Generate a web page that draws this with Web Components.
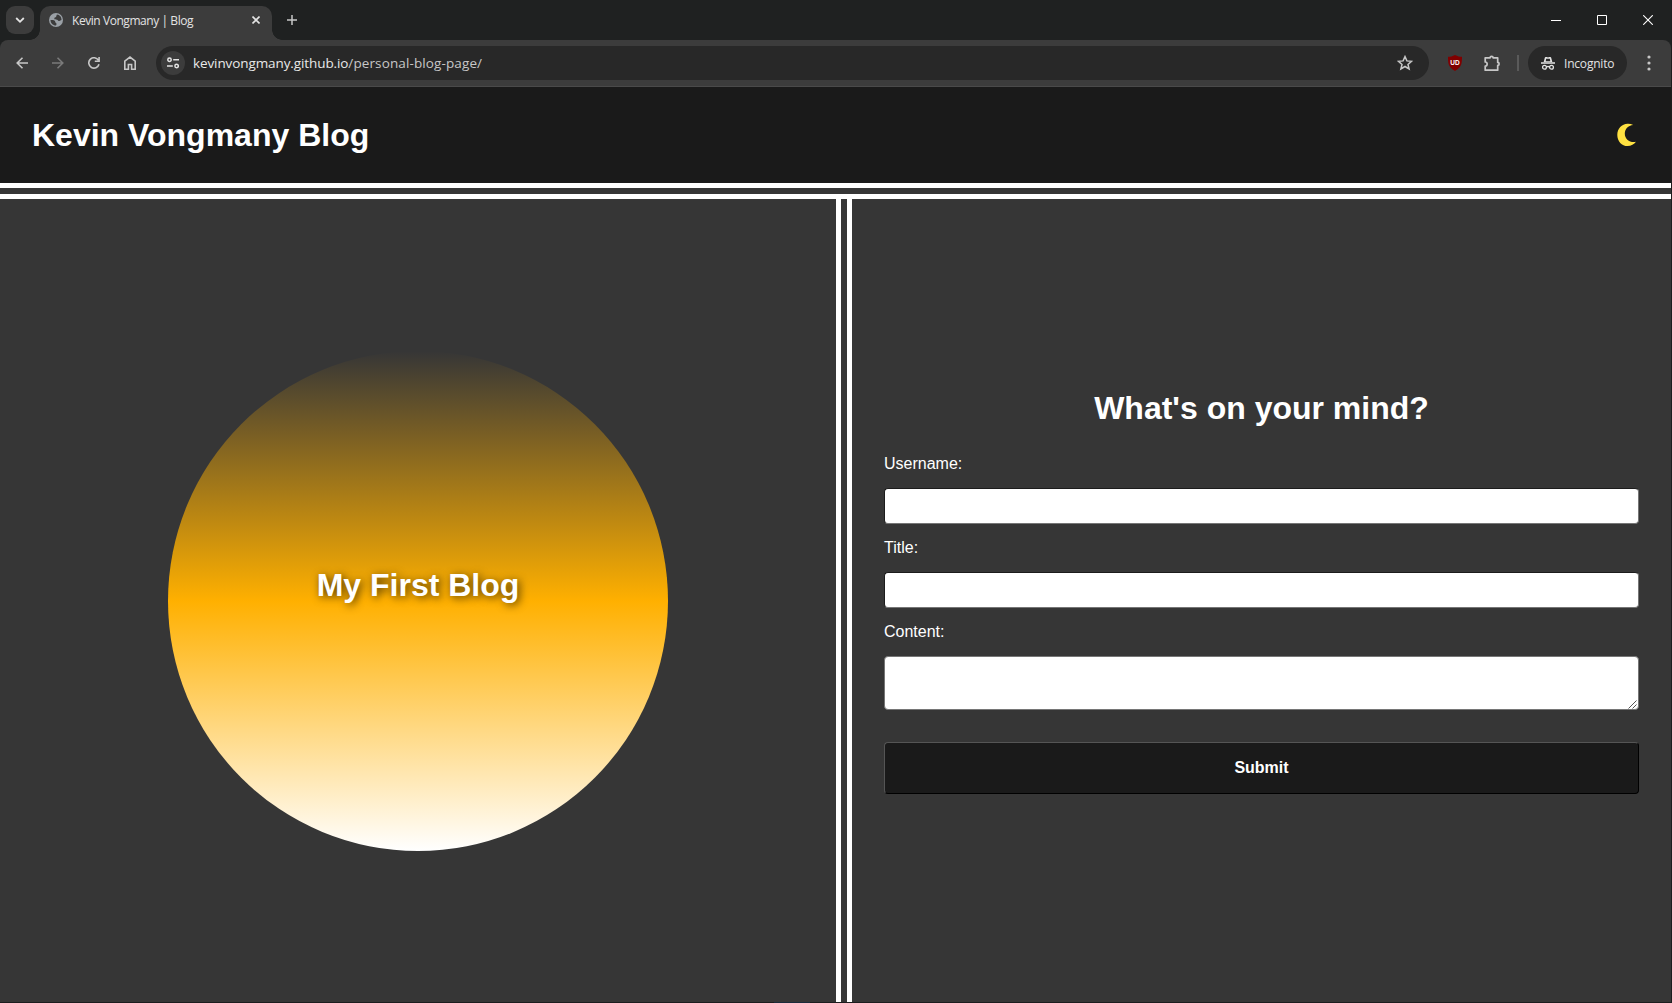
<!DOCTYPE html>
<html lang="en">
<head>
<meta charset="utf-8">
<title>Kevin Vongmany | Blog</title>
<style>
html,body{margin:0;height:100%;overflow:hidden}
body{background:linear-gradient(90deg,transparent 774px,#1b2b3b 774px 810px,transparent 810px) 0 1002px/100% 1px no-repeat #1c1d1e}
</style>
</head>
<body>
<browser-window></browser-window>
<script>
const define = (name, html) => {
  const t = document.createElement('template');
  t.innerHTML = html;
  customElements.define(name, class extends HTMLElement {
    constructor() {
      super();
      this.attachShadow({ mode: 'open' }).appendChild(t.content.cloneNode(true));
    }
  });
};

const icons = {
  chevron: [10, 10, '<path d="M1.200 3 5 6.800 8.800 3" fill="none" stroke="#e3e3e3" stroke-width="1.8"/>'],
  globe: [14, 14, '<circle cx="7" cy="7" r="7" fill="#9aa0a6"/><path d="M8 1.5c2.800.3 4.600 2.700 4.500 5.500-1 .2-1.200 1-2.200 1-1.300 0-1.300-1.100-2.300-1.300-1.500-.2-2.700.2-2.700-1.200 0-1.200 1.200-1 1.700-1.500.5-.6.2-1.500 1-2.500zM1.500 7c1.400 0 3.300 0 4.200.8.7.6.3 1.500 1 1.900.9.500 1.200.9.300 2.900-3.200-.1-5.500-2.600-5.500-5.600z" fill="#3c3c3c"/>'],
  x: [8, 8, '<path d="M.5.5l7 7M7.500.5l-7 7" stroke="#e3e3e3" stroke-width="1.600"/>'],
  plus: [10, 10, '<path d="M5 0v10M0 5h10" stroke="#c7c7c7" stroke-width="1.500"/>'],
  min: [10, 10, '<path d="M0 5.500h10" stroke="#fff"/>'],
  max: [10, 10, '<path d="M.5.5h9v9h-9z" fill="none" stroke="#fff"/>'],
  close: [10, 10, '<path d="M.2.2l9.600 9.600M9.800.2.2 9.800" stroke="#fff" stroke-width="1.100"/>'],
  back: [12, 12, '<path d="M12 6H1.300M6.500.7 1.200 6l5.300 5.300" fill="none" stroke="#c7c7c7" stroke-width="1.600"/>'],
  forward: [12, 12, '<path d="M0 6h10.700M5.500.7 10.800 6l-5.300 5.300" fill="none" stroke="#7a7a7a" stroke-width="1.600"/>'],
  reload: [12, 12, '<path d="M10.400 3.200A5.200 5.200 0 1 0 11 7.300M11.100 0v4.300H6.800" fill="none" stroke="#c7c7c7" stroke-width="1.600"/>'],
  home: [12, 14, '<path d="M.8 5.200 6 1.100l5.200 4.100v8H7.600V8.500H4.400v4.700H.8z" fill="none" stroke="#c7c7c7" stroke-width="1.600"/>'],
  tune: [12, 12, '<g fill="none" stroke="#e3e3e3" stroke-width="1.500"><circle cx="2.500" cy="2.700" r="1.700"/><path d="M6.200 2.700H12M0 9h5.800"/><circle cx="9.600" cy="9" r="1.700"/></g>'],
  star: [16, 16, '<path d="M8 1.600l1.900 4.300 4.600.4-3.500 3.100 1.100 4.600L8 11.500 3.900 14 5 9.400 1.500 6.300l4.600-.4z" fill="none" stroke="#c7c7c7" stroke-width="1.500"/>'],
  puzzle: [17, 17, '<path d="M1.200 2.800h4.900c0-1.900 3-1.900 3 0h4.600v4.600c1.900 0 1.900 3 0 3v4.800H1.200v-4.100c2.600 0 2.600-4.100 0-4.100z" fill="none" stroke="#c7c7c7" stroke-width="1.700" stroke-linejoin="round"/>'],
  incognito: [14, 14, '<path d="M4.700 1h1.200l1.100.5L8.100 1h1.200c.5 0 .8.300.9.700L11.300 6H2.700l1.100-4.300c.1-.4.400-.7.900-.7zM0 6.300h14v1.400H0z" fill="#e3e3e3"/><path d="M5.200 2.800h3.600l.5 2.500H4.700z" fill="#282828"/><g fill="none" stroke="#e3e3e3" stroke-width="1.300"><circle cx="3.500" cy="11.200" r="1.900"/><circle cx="10.500" cy="11.200" r="1.900"/><path d="M5.400 10.900q1.600-.8 3.200 0"/></g>'],
  dots: [4, 16, '<g fill="#c7c7c7"><circle cx="2" cy="2" r="1.600"/><circle cx="2" cy="8" r="1.600"/><circle cx="2" cy="14" r="1.600"/></g>'],
  grip: [10, 10, '<path d="M.5 9.500l8-8M4.500 9.500l4-4" stroke="#555" fill="none"/>'],
  moon: [20, 24, '<path d="M16.200 2.100A10 10 0 0 0 10.600.7C4.700.7.300 5.700.3 11.900S4.700 23 10.600 23c3.500 0 6.500-1.600 8.400-4.200-6 1.200-11.200-2.600-11.200-8.100 0-4.500 3.200-8.100 8.400-8.600z" fill="#ffe141"/>']
};
customElements.define('ui-icon', class extends HTMLElement {
  constructor() { super(); this.attachShadow({ mode: 'open' }); }
  connectedCallback() {
    const [w, h, body] = icons[this.getAttribute('name')];
    this.shadowRoot.innerHTML = `<style>:host{display:block;flex:none}svg{display:block}</style><svg width="${w}" height="${h}" viewBox="0 0 ${w} ${h}">${body}</svg>`;
  }
});

define('ublock-badge', `<style>
:host{display:grid;width:14px;height:16px;flex:none}
svg,span{grid-area:1/1}
span{font:bold 6.500px/16px "Liberation Sans",sans-serif;color:#fff;text-align:center}
</style><svg width="14" height="16" viewBox="0 0 14 16"><path d="M7 0c2.500 1.300 4.500 1.800 7 1.800 0 7-.3 10.200-7 14.200C.3 12 0 8.800 0 1.800 2.500 1.800 4.500 1.300 7 0z" fill="#800000"/></svg><span>UD</span>`);

define('tab-strip', `<style>
:host{display:flex;height:40px;background:#1f2121;box-sizing:border-box;padding:6px 18px 0 6px;font:12px "Open Sans",sans-serif;color:#e3e3e3}
.search{width:28px;height:28px;border-radius:9px;background:#3c3c3c;display:grid;place-items:center;margin-right:6px}
.tab{position:relative;width:232px;height:34px;box-sizing:border-box;background:#3c3c3c;border-radius:10px 10px 0 0;display:flex;align-items:center;padding:0 12px 6px 9px}
.tab::before,.tab::after{content:"";position:absolute;bottom:0;width:10px;height:10px}
.tab::before{left:-10px;background:radial-gradient(circle at 0 0,transparent 9.500px,#3c3c3c 10px)}
.tab::after{right:-10px;background:radial-gradient(circle at 100% 0,transparent 9.500px,#3c3c3c 10px)}
.title{margin:1px 0 0 9px;flex:1;white-space:nowrap;letter-spacing:-.44px}
.new{margin:9px 0 0 15px}
.controls{margin:9px 0 0 auto;display:flex;gap:36px}
</style>
<div class="search"><ui-icon name="chevron"></ui-icon></div>
<div class="tab"><ui-icon name="globe"></ui-icon><span class="title"><slot></slot></span><ui-icon name="x"></ui-icon></div>
<ui-icon class="new" name="plus"></ui-icon>
<div class="controls"><ui-icon name="min"></ui-icon><ui-icon name="max"></ui-icon><ui-icon name="close"></ui-icon></div>`);

define('tool-bar', `<style>
:host{display:block;background:#1f2121;font-family:"Open Sans",sans-serif}
.bar{display:flex;align-items:center;height:47px;box-sizing:border-box;background:#3c3c3c;border-bottom:1px solid #4a4a4a;border-radius:8px 8px 0 0;padding:0 20px 0 16px}
.nav{display:flex;align-items:center;gap:24px;width:140px}
.omni{flex:1;height:34px;border-radius:17px;background:#282828;display:flex;align-items:center;padding:0 16px 0 5px}
.site{width:24px;height:24px;border-radius:50%;background:#3c3c3c;display:grid;place-items:center}
.url{flex:1;margin-left:8px;font-size:13.500px;color:#c7c7c7;white-space:nowrap;letter-spacing:.12px}
.url ::slotted(b){font-weight:400;color:#e9e9e9;letter-spacing:-.1px}
ublock-badge{margin-left:19px}
.puzzle{margin-left:22px}
.sep{width:2px;height:16px;background:#5a5a5a;margin:0 9px 0 16px}
.inc{box-sizing:border-box;width:99px;height:34px;border-radius:17px;background:#282828;display:flex;align-items:center;gap:9px;padding-left:13px;font-size:12px;color:#e3e3e3;letter-spacing:-.2px;margin-right:20px}
</style>
<div class="bar"><div class="nav"><ui-icon name="back"></ui-icon><ui-icon name="forward"></ui-icon><ui-icon name="reload"></ui-icon><ui-icon name="home"></ui-icon></div>
<div class="omni"><div class="site"><ui-icon name="tune"></ui-icon></div><span class="url"><slot></slot></span><ui-icon name="star"></ui-icon></div>
<ublock-badge></ublock-badge><ui-icon class="puzzle" name="puzzle"></ui-icon><div class="sep"></div>
<div class="inc"><ui-icon name="incognito"></ui-icon><span>Incognito</span></div><ui-icon name="dots"></ui-icon></div>`);

define('blog-header', `<style>
:host{display:flex;justify-content:space-between;align-items:center;box-sizing:border-box;height:112px;padding:0 34px 0 32px;background:#1a1a1a}
:host{border-bottom:16px double #fff;background-clip:padding-box}
h1{margin:0;font-size:32px;line-height:37px}
</style><h1><slot></slot></h1><ui-icon name="moon"></ui-icon>`);

define('sun-circle', `<style>
:host{display:flex;align-items:center;justify-content:center;width:500px;height:500px;border-radius:50%;background:linear-gradient(transparent,#ffb000 50%,#fff)}
h1{margin:0 0 30px;font-size:32px;line-height:37px;text-shadow:2px 2px 8px rgba(0,0,0,.7)}
</style><h1><slot></slot></h1>`);

define('text-field', `<style>
:host{display:block}
label{display:block;font-size:16px;line-height:18px;margin-bottom:15px}
input{display:block;box-sizing:border-box;width:100%;height:36px;margin:0;background:#fff;border:1px solid;border-color:#1c1c1c #767676 #767676 #1c1c1c;border-radius:4px}
</style><label><slot></slot></label><input>`);

define('area-field', `<style>
:host{display:block;position:relative}
label{display:block;font-size:16px;line-height:18px;margin-bottom:15px}
textarea{display:block;box-sizing:border-box;width:100%;height:54px;margin:0;background:#fff;border:1px solid #767676;border-radius:4px;resize:none}
ui-icon{position:absolute;right:1px;bottom:1px}
</style><label><slot></slot></label><textarea></textarea><ui-icon name="grip"></ui-icon>`);

define('blog-form', `<style>
:host{display:flex;flex-direction:column}
h1{margin:0 0 28px;font-size:32px;line-height:37px;text-align:center}
text-field{margin-bottom:15px}
button{margin-top:32px;height:52px;font:bold 16px "Liberation Sans",sans-serif;color:#fff;background:#1a1a1a;border:1px solid;border-color:#555 #000 #000 #555;border-radius:4px;padding:0}
</style><h1>What's on your mind?</h1>
<text-field>Username:</text-field><text-field>Title:</text-field><area-field>Content:</area-field>
<button>Submit</button>`);

define('blog-page', `<style>
:host{display:flex;flex-direction:column;background:#363636;color:#fff;font-family:"Liberation Sans",Arial,sans-serif}
main{flex:1;display:flex}
.left{width:836px;display:flex;align-items:center;justify-content:center;border-right:16px double #fff}
.right{flex:1;display:flex;flex-direction:column;justify-content:center;padding:0 32px 17px}
</style>
<blog-header>Kevin Vongmany Blog</blog-header>
<main><section class="left"><sun-circle>My First Blog</sun-circle></section><section class="right"><blog-form></blog-form></section></main>`);

define('browser-window', `<style>
:host{display:flex;flex-direction:column;width:1671px;height:1002px;background:#363636}
blog-page{flex:1}
</style>
<tab-strip>Kevin Vongmany | Blog</tab-strip>
<tool-bar><b>kevinvongmany.github.io</b>/personal-blog-page/</tool-bar>
<blog-page></blog-page>`);
</script>
</body>
</html>
